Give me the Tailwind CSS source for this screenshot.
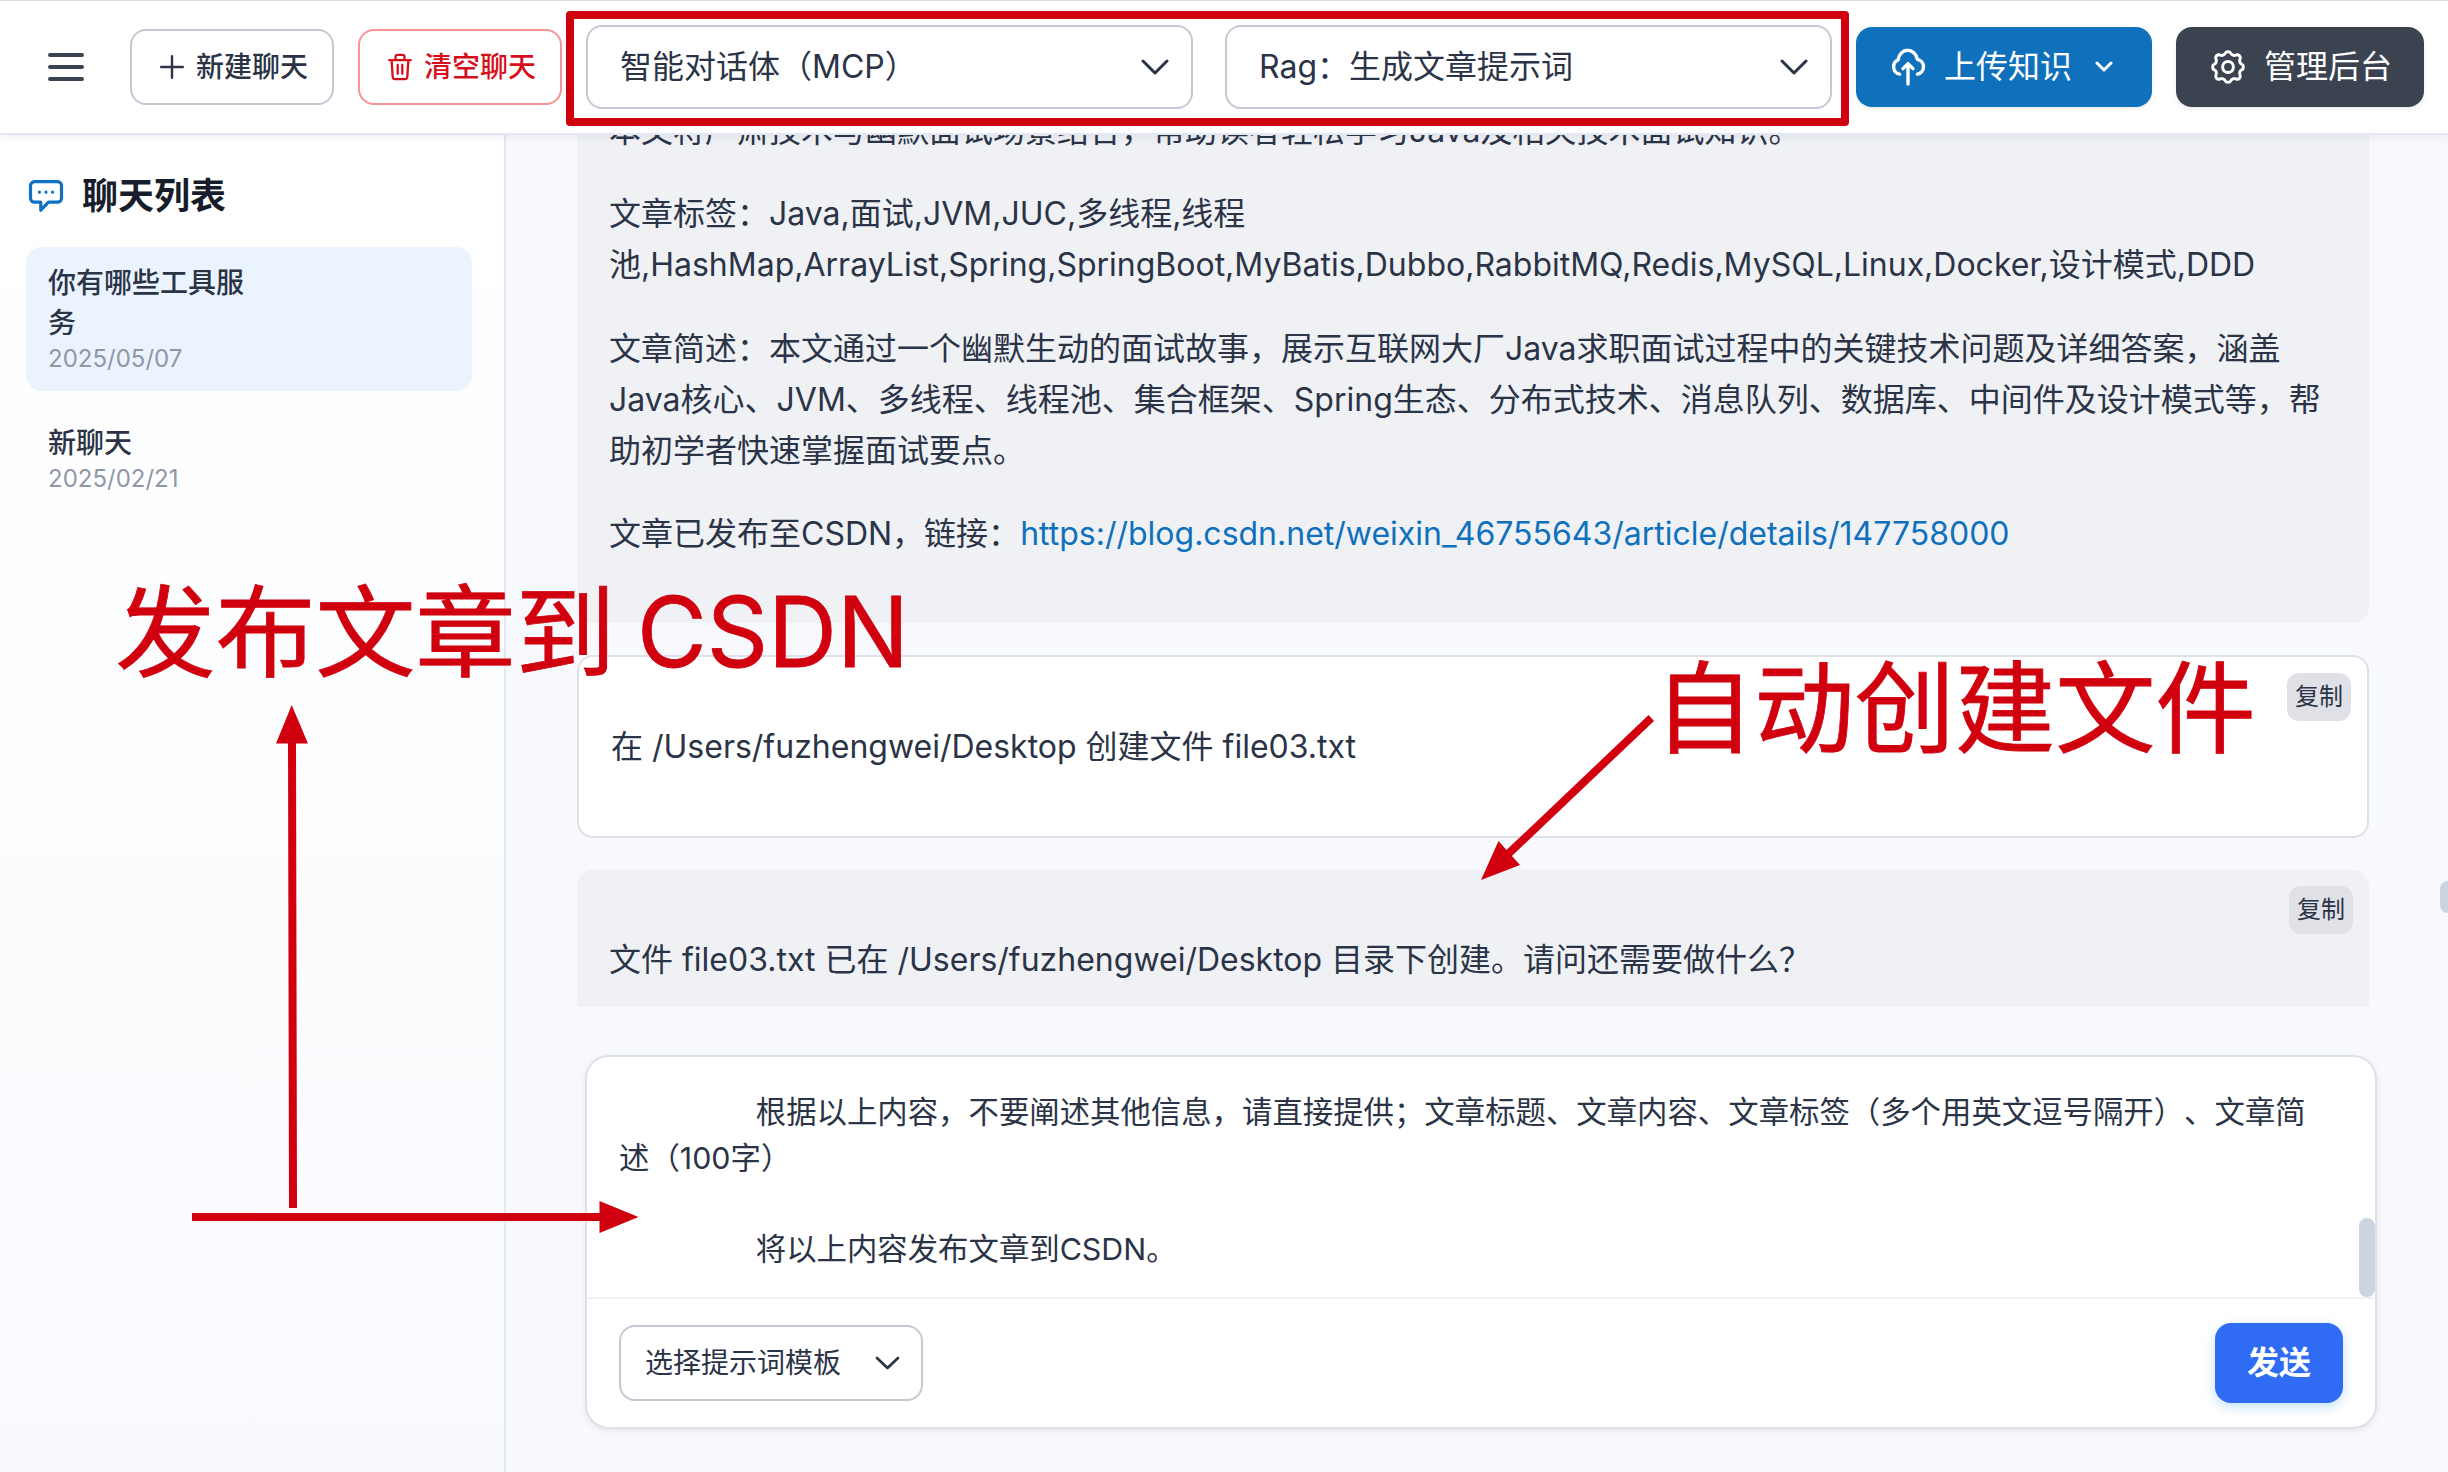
<!DOCTYPE html>
<html lang="zh-CN">
<head>
<meta charset="utf-8">
<title>聊天</title>
<script src="https://cdn.jsdelivr.net/npm/@tailwindcss/browser@4"></script>
</head>
<body class="relative flex h-[1472px] w-[2448px] flex-col overflow-hidden bg-[#f8f9fc] font-['Inter','Noto_Sans_CJK_SC',sans-serif] text-[32px] text-[#2b3446] [text-spacing-trim:space-all]">
  <header class="relative z-10 flex h-[135px] shrink-0 items-center border-t border-b-2 border-t-[#d9d9da] border-b-[#e3e8f1] bg-white pr-6 pl-12 shadow-[0_2px_8px_rgba(30,50,90,0.08)]">
    <svg class="mr-[46px] h-7 w-9 shrink-0" viewBox="0 0 36 28" stroke="#3b4352" stroke-width="4" stroke-linecap="round"><path d="M2 2h32M2 14h32M2 26h32"/></svg>
    <button class="mr-6 flex h-[76px] w-[204px] shrink-0 items-center rounded-[16px] border-2 border-[#c5c9d4] pl-7 text-[28px] font-medium">
      <svg class="mr-3 h-6 w-6 shrink-0" viewBox="0 0 24 24" stroke="currentColor" stroke-width="2.4" stroke-linecap="round"><path d="M1.2 12h21.6M12 1.2v21.6"/></svg>
      <span class="whitespace-nowrap">新建聊天</span>
    </button>
    <button class="mr-6 flex h-[76px] w-[204px] shrink-0 items-center rounded-[16px] border-2 border-[#fb9296] pl-[26px] text-[28px] font-medium text-[#d70f1b]">
      <svg class="mr-[10px] h-7 w-7 shrink-0" viewBox="0 0 28 28" fill="none" stroke="currentColor" stroke-width="2.3" stroke-linecap="round" stroke-linejoin="round"><path d="M3.2 7.2h21.6M9.5 7V3.8a2 2 0 0 1 2-2h5a2 2 0 0 1 2 2V7M5.6 7.4l1.1 16.4a2.4 2.4 0 0 0 2.4 2.3h9.8a2.4 2.4 0 0 0 2.4-2.3L22.4 7.4M11.7 12v8.8M16.3 12v8.8"/></svg>
      <span class="whitespace-nowrap">清空聊天</span>
    </button>
    <div class="mr-8 flex h-[84px] w-[607px] shrink-0 items-center justify-between rounded-[16px] border-2 border-[#c5c9d4] pr-[22px] pl-8">
      <span>智能对话体（MCP）</span>
      <svg class="h-4 w-7" viewBox="0 0 28 16" fill="none" stroke="currentColor" stroke-width="3" stroke-linecap="round" stroke-linejoin="round"><path d="M2 2l12 12L26 2"/></svg>
    </div>
    <div class="mr-6 flex h-[84px] w-[607px] shrink-0 items-center justify-between rounded-[16px] border-2 border-[#c5c9d4] pr-[22px] pl-8">
      <span>Rag：生成文章提示词</span>
      <svg class="h-4 w-7" viewBox="0 0 28 16" fill="none" stroke="currentColor" stroke-width="3" stroke-linecap="round" stroke-linejoin="round"><path d="M2 2l12 12L26 2"/></svg>
    </div>
    <button class="mr-6 flex h-20 w-[296px] shrink-0 items-center rounded-[16px] bg-[#0f70bc] pl-[34px] text-white shadow-[0_2px_4px_rgba(0,0,0,0.08)]">
      <svg class="mr-[18px] h-[38px] w-9 shrink-0" viewBox="0 0 36 38" fill="none" stroke="currentColor" stroke-width="3.4" stroke-linecap="round" stroke-linejoin="round"><path d="M9.6 26.2A7.6 7.6 0 0 1 8 11.9C9 6 13 2.3 17.600 2.300S26.300 5.800 27.400 11.300A7.600 7.600 0 0 1 27.400 26.200M18 36V16M13 20.600l5-5 5 5"/></svg>
      <span class="whitespace-nowrap">上传知识</span>
      <svg class="ml-[23px] h-3 w-[18px]" viewBox="0 0 18 12" fill="none" stroke="currentColor" stroke-width="3" stroke-linecap="round" stroke-linejoin="round"><path d="M2 2l7 7 7-7"/></svg>
    </button>
    <button class="flex h-20 w-[248px] shrink-0 items-center rounded-[16px] bg-[#3c4350] pl-[34px] text-white shadow-[0_2px_4px_rgba(0,0,0,0.08)]">
      <svg class="mr-[18px] h-9 w-9 shrink-0" viewBox="-18 -18 36 36" fill="none" stroke="currentColor" stroke-width="3" stroke-linejoin="round"><circle r="5.400"/><path d="M-2.600 -14C-1.900 -15.800 1.900 -15.800 2.600 -14C3.500 -11.900 5.900 -11 8 -12C10.600 -13.100 13.100 -10.600 12 -8C11 -5.900 11.900 -3.500 14 -2.600C15.800 -1.900 15.800 1.900 14 2.600C11.900 3.500 11 5.900 12 8C13.100 10.600 10.600 13.100 8 12C5.900 11 3.500 11.900 2.600 14C1.900 15.800 -1.900 15.800 -2.600 14C-3.500 11.900 -5.900 11 -8 12C-10.600 13.100 -13.100 10.600 -12 8C-11 5.900 -11.900 3.500 -14 2.600C-15.800 1.900 -15.800 -1.900 -14 -2.600C-11.900 -3.500 -11 -5.900 -12 -8C-13.100 -10.600 -10.600 -13.100 -8 -12C-5.900 -11 -3.500 -11.900 -2.600 -14Z"/></svg>
      <span class="whitespace-nowrap">管理后台</span>
    </button>
  </header>

  <div class="flex min-h-0 flex-1">
    <aside class="flex w-[506px] shrink-0 flex-col border-r-2 border-[#e3e8f1] bg-linear-to-b from-white to-[#f8fafd] pt-[33px] pr-8 pl-[26px]">
      <h2 class="flex h-14 items-center pl-[2px] text-[36px] font-bold text-[#171d2a]">
        <svg class="mr-[18px] h-9 w-9" viewBox="0 0 36 36" fill="none" stroke="#0f70c4" stroke-width="3.200" stroke-linejoin="round"><path d="M6.500 3.600h23a4 4 0 0 1 4 4v12.600a4 4 0 0 1-4 4h-9l-7.700 8v-8H6.500a4 4 0 0 1-4-4V7.600a4 4 0 0 1 4-4z"/><path d="M11.400 14.200h.01M18 14.200h.01M24.600 14.200h.01" stroke-linecap="round"/></svg>
        聊天列表
      </h2>
      <div class="mt-[23px] rounded-[16px] bg-[#ebf3ff] px-[22px] py-4">
        <div class="w-[210px] text-[28px] leading-10 font-medium">你有哪些工具服务</div>
        <div class="text-2xl leading-8 text-[#9097a5]">2025/05/07</div>
      </div>
      <div class="mt-4 px-[22px] py-4">
        <div class="w-[210px] text-[28px] leading-10 font-medium">新聊天</div>
        <div class="text-2xl leading-8 text-[#9097a5]">2025/02/21</div>
      </div>
    </aside>

    <main class="relative flex min-w-0 flex-1 flex-col">
      <div class="flex h-[872px] shrink-0 flex-col gap-8 overflow-hidden pr-[79px] pl-[71px] leading-[51.2px]">
        <article class="-mt-24 flex shrink-0 flex-col gap-8 rounded-[16px] bg-[#eff1f5] px-8 pt-[66px] pb-16">
          <p>本文将严肃技术与幽默面试场景结合，帮助读者轻松学习Java及相关技术面试知识。</p>
          <p>文章标签：Java,面试,JVM,JUC,多线程,线程<br><span class="whitespace-nowrap">池,HashMap,ArrayList,Spring,SpringBoot,MyBatis,Dubbo,RabbitMQ,Redis,MySQL,Linux,Docker,设计模式,DDD</span></p>
          <p class="whitespace-nowrap">文章简述：本文通过一个幽默生动的面试故事，展示互联网大厂Java求职面试过程中的关键技术问题及详细答案，涵盖<br>Java核心、JVM、多线程、线程池、集合框架、Spring生态、分布式技术、消息队列、数据库、中间件及设计模式等，帮<br>助初学者快速掌握面试要点。</p>
          <p>文章已发布至CSDN，链接：<a class="text-[#0f70bc]">https://blog.csdn.net/weixin_46755643/article/details/147758000</a></p>
        </article>
        <article class="relative h-[183px] shrink-0 rounded-[16px] border-2 border-[#dfe1e8] bg-white px-8 pt-16">
          <p>在 /Users/fuzhengwei/Desktop 创建文件 file03.txt</p>
          <button class="absolute top-4 right-4 flex h-12 w-16 items-center justify-center rounded-xl bg-[#e0e1e7] text-2xl">复制</button>
        </article>
        <article class="relative h-[183px] shrink-0 rounded-[16px] bg-[#eff1f5] px-8 pt-16">
          <p>文件 file03.txt 已在 /Users/fuzhengwei/Desktop 目录下创建。请问还需要做什么？</p>
          <button class="absolute top-4 right-4 flex h-12 w-16 items-center justify-center rounded-xl bg-[#e0e1e7] text-2xl">复制</button>
        </article>
      </div>
      <div class="absolute top-[746px] left-[1934px] h-8 w-4 rounded-lg bg-[#cbd3e1]"></div>

      <section class="relative mt-12 ml-[79px] flex h-[374px] w-[1792px] flex-col rounded-[24px] border-2 border-[#dfe1e8] bg-white shadow-[0_2px_6px_rgba(0,0,0,0.07)]">
        <div class="h-[242px] border-b-2 border-[#eff1f6] pt-[33px] pl-8 text-[30.4px] leading-[45.6px] whitespace-pre">                根据以上内容，不要阐述其他信息，请直接提供；文章标题、文章内容、文章标签（多个用英文逗号隔开）、文章简
述（100字）

                将以上内容发布文章到CSDN。</div>
        <div class="absolute top-[161px] right-0 h-[79px] w-4 rounded-lg bg-[#ccd4e1]"></div>
        <div class="flex flex-1 items-center justify-between pr-8 pl-8">
          <div class="flex h-[76px] w-[304px] items-center justify-between rounded-[16px] border-2 border-[#c5c9d4] pr-[21px] pl-6 text-[28px]">
            <span>选择提示词模板</span>
            <svg class="h-[14px] w-[25px]" viewBox="0 0 25 14" fill="none" stroke="currentColor" stroke-width="2.700" stroke-linecap="round" stroke-linejoin="round"><path d="M2 2l10.500 10L23 2"/></svg>
          </div>
          <button class="flex h-20 w-32 items-center justify-center rounded-[16px] bg-[#2f6cf3] font-bold text-white shadow-[0_4px_12px_rgba(14,140,233,0.25)]">发送</button>
        </div>
      </section>
    </main>
  </div>

  <!-- annotations laid over the page -->
  <div class="absolute top-[11px] left-[566px] z-20 h-[115px] w-[1283px] rounded-[4px] border-8 border-[#d0000e]"></div>
  <svg class="absolute top-0 left-0 z-20 h-[1472px] w-[2448px]" viewBox="0 0 2448 1472" fill="#d0000e">
    <g stroke="#d0000e" stroke-width="8"><path d="M292 738L293 1208M192 1217H604M1651.300 718L1506 856"/></g>
    <path d="M291.700 705L308 743.500H276zM638.500 1217L599.500 1233V1201zM1481 880L1498.500 841L1520 865z"/>
    <text x="115.500" y="669" font-size="100" stroke="#d0000e" stroke-width="0.8">发布文章到</text>
    <text x="637" y="667" font-size="98" textLength="272" lengthAdjust="spacingAndGlyphs" stroke="#d0000e" stroke-width="0.8">CSDN</text>
    <text x="1654" y="745" font-size="100.300" stroke="#d0000e" stroke-width="0.8">自动创建文件</text>
  </svg>
</body>
</html>
